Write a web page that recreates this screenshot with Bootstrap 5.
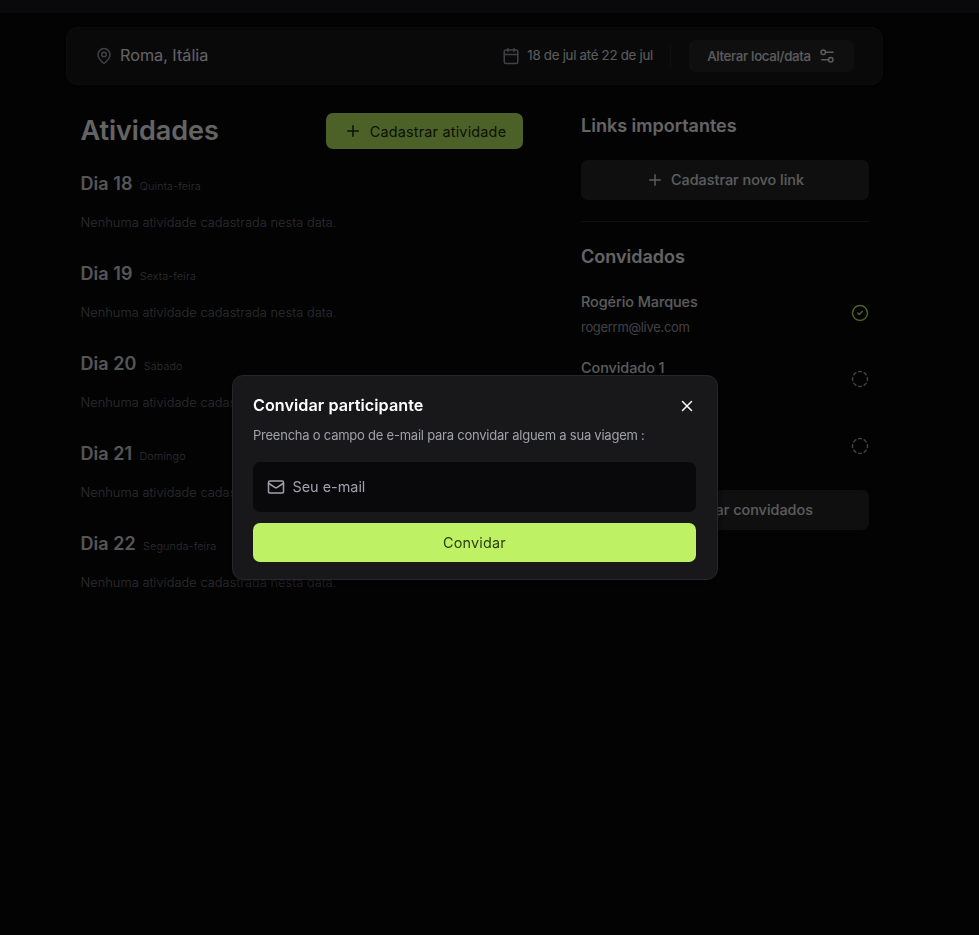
<!DOCTYPE html>
<html lang="pt-BR">
<head>
<meta charset="utf-8">
<meta name="viewport" content="width=device-width, initial-scale=1">
<title>Plann.er</title>
<link rel="stylesheet" href="https://cdn.jsdelivr.net/npm/bootstrap@5.3.0/dist/css/bootstrap.min.css">
<style>
html{font-size:14.4px}
body{font-family:Inter,sans-serif;font-size:14.4px;line-height:21.6px;background:#09090b;color:#fafafa;height:935px;overflow:hidden}
svg{display:block;flex:none;fill:none;stroke:currentColor;stroke-width:2;stroke-linecap:round;stroke-linejoin:round;width:18px;height:18px}
.trip{width:817px;margin-left:66px;padding-top:27px}
.trip-bar{height:58px;padding:0 28px;background:#18181b;border:1px solid #1f1f23;border-radius:11px;box-shadow:0 1px 4px #000}
.place{font-size:16.2px;gap:7px;color:#f4f4f5}
.when{font-size:13.3px;letter-spacing:-.28px;gap:7.5px;color:#e4e4e7}
.muted-ico{color:#a1a1aa}
.vline{width:1px;height:22px;background:#27272a;margin:0 18px 0 17px}
.btn-dark2,.btn-lime{--bs-btn-border-width:0;display:flex;align-items:center;justify-content:center;border-radius:7px;line-height:20px}
.btn-dark2,.btn-dark2:hover{background:#27272a;color:#e4e4e7;font-weight:500}
.btn-lime,.btn-lime:hover{background:#bef264;color:#1a2e05;letter-spacing:.2px}
.alter{height:32px;width:165px;font-size:13.3px;letter-spacing:-.32px;gap:7px;padding:0 0 1px}
.alter svg{margin-top:1px}
.full{height:40px;width:100%;font-size:14.4px;gap:7px;padding:0}
.trip-main{padding:28px 14px 0 14.4px}
.acts{width:442.6px}
.guests{width:288px}
.acts h1{font-size:27px;line-height:36px;font-weight:600;margin:0;color:#fafafa}
.add{width:197px;height:36px;font-size:14.4px;gap:8px;padding:2px 0 0 1px}
.add svg{margin-top:-2px}
.day{height:90px}
.day h2,.guests h2{font-size:18px;line-height:26px;font-weight:600;margin:0}
.day h2{color:#d4d4d8;letter-spacing:.08px}
.day small{font-size:10.8px;line-height:14px;color:#71717a;font-weight:300;margin-left:7.2px;letter-spacing:.12px}
.day p{font-size:12.8px;line-height:18px;color:#71717a;margin:17px 0 0;font-weight:300;letter-spacing:.06px}
.links-btn{margin-top:21px}
.rule{height:1px;background:#27272a;margin:21px 0 22px}
.guest-list{padding-top:21px}
.guest{height:66.3px}
.guest b{display:block;font-weight:500;color:#e4e4e7;line-height:22px;letter-spacing:-.05px}
.guest span{display:block;font-size:13px;line-height:18px;color:#a1a1aa;margin-top:5px;letter-spacing:-.3px}
.guest svg{margin-top:13px}
.ok{color:#bef264}
.shade{position:fixed;inset:13px 0 0;background:rgba(0,0,0,.6)}
.invite{position:fixed;left:232px;top:375px;width:486px;height:205px;padding:19px 21px 0 20px;background:#18181b;border:1px solid #26262a;border-radius:11px;box-shadow:0 3px 10px rgba(0,0,0,.6)}
.invite h3{font-size:16.2px;line-height:22px;font-weight:600;color:#fff;margin:-1px 0 1px;letter-spacing:.04px}
.invite p{font-size:13px;line-height:18px;color:#a1a1aa;margin:9px 0 18px;letter-spacing:-.23px}
.mailbox{height:50px;background:#09090b;border-radius:7px;padding-left:14px;gap:7.5px;color:#a1a1aa;margin-bottom:11px}
.mailbox input{background:none;border:0;outline:0;padding:0;font-size:14.4px;color:#fff}
.mailbox input::placeholder{color:#a1a1aa}
.btn-lime.send{height:39px;width:100%;font-size:14.4px;padding:0;color:#2b4010}
</style>
</head>
<body>
<div class="trip">
  <header class="trip-bar d-flex align-items-center justify-content-between">
    <div class="place d-flex align-items-center"><svg class="muted-ico" viewBox="0 0 24 24"><path d="M20 10c0 6-8 12-8 12s-8-6-8-12a8 8 0 0 1 16 0Z"/><circle cx="12" cy="10" r="3"/></svg>Roma, Itália</div>
    <div class="d-flex align-items-center">
      <div class="when d-flex align-items-center"><svg class="muted-ico" viewBox="0 0 24 24"><rect x="3" y="4" width="18" height="18" rx="2"/><path d="M8 2v4M16 2v4M3 10h18"/></svg><span>18 de jul até 22 de jul</span></div>
      <div class="vline"></div>
      <button class="btn btn-dark2 alter">Alterar local/data<svg viewBox="0 0 24 24"><path d="M20 7h-9M14 17H5"/><circle cx="17" cy="17" r="3"/><circle cx="7" cy="7" r="3"/></svg></button>
    </div>
  </header>
  <main class="trip-main d-flex justify-content-between">
    <section class="acts">
      <div class="d-flex justify-content-between align-items-center mb-4"><h1>Atividades</h1><button class="btn btn-lime add"><svg viewBox="0 0 24 24"><path d="M5 12h14M12 5v14"/></svg>Cadastrar atividade</button></div>
      <div class="day"><div class="d-flex align-items-baseline"><h2>Dia 18</h2><small>Quinta-feira</small></div><p>Nenhuma atividade cadastrada nesta data.</p></div>
      <div class="day"><div class="d-flex align-items-baseline"><h2>Dia 19</h2><small>Sexta-feira</small></div><p>Nenhuma atividade cadastrada nesta data.</p></div>
      <div class="day"><div class="d-flex align-items-baseline"><h2>Dia 20</h2><small>Sábado</small></div><p>Nenhuma atividade cadastrada nesta data.</p></div>
      <div class="day"><div class="d-flex align-items-baseline"><h2>Dia 21</h2><small>Domingo</small></div><p>Nenhuma atividade cadastrada nesta data.</p></div>
      <div class="day"><div class="d-flex align-items-baseline"><h2>Dia 22</h2><small>Segunda-feira</small></div><p>Nenhuma atividade cadastrada nesta data.</p></div>
    </section>
    <aside class="guests">
      <h2>Links importantes</h2>
      <button class="btn btn-dark2 full links-btn"><svg viewBox="0 0 24 24"><path d="M5 12h14M12 5v14"/></svg>Cadastrar novo link</button>
      <div class="rule"></div>
      <h2>Convidados</h2>
      <div class="guest-list">
        <div class="guest d-flex justify-content-between"><div><b>Rogério Marques</b><span>rogerrm@live.com</span></div><svg class="ok" viewBox="0 0 24 24"><circle cx="12" cy="12" r="10"/><path d="m9 12 2 2 4-4"/></svg></div>
        <div class="guest d-flex justify-content-between"><div><b>Convidado 1</b></div><svg class="muted-ico" viewBox="0 0 24 24"><path d="M10.1 2.18a9.93 9.93 0 0 1 3.8 0M17.6 3.71a9.95 9.95 0 0 1 2.69 2.7M21.82 10.1a9.93 9.93 0 0 1 0 3.8M20.29 17.6a9.95 9.95 0 0 1-2.7 2.69M13.9 21.82a9.94 9.94 0 0 1-3.8 0M6.4 20.29a9.95 9.95 0 0 1-2.69-2.7M2.18 13.9a9.93 9.93 0 0 1 0-3.8M3.71 6.4a9.95 9.95 0 0 1 2.7-2.69"/></svg></div>
        <div class="guest d-flex justify-content-between"><div></div><svg class="muted-ico" viewBox="0 0 24 24"><path d="M10.1 2.18a9.93 9.93 0 0 1 3.8 0M17.6 3.71a9.95 9.95 0 0 1 2.69 2.7M21.82 10.1a9.93 9.93 0 0 1 0 3.8M20.29 17.6a9.95 9.95 0 0 1-2.7 2.69M13.9 21.82a9.94 9.94 0 0 1-3.8 0M6.4 20.29a9.95 9.95 0 0 1-2.69-2.7M2.18 13.9a9.93 9.93 0 0 1 0-3.8M3.71 6.4a9.95 9.95 0 0 1 2.7-2.69"/></svg></div>
      </div>
      <button class="btn btn-dark2 full"><svg viewBox="0 0 24 24"><circle cx="18" cy="15" r="3"/><circle cx="9" cy="7" r="4"/><path d="M10 15H6a4 4 0 0 0-4 4v2"/></svg>Gerenciar convidados</button>
    </aside>
  </main>
</div>
<div class="shade"></div>
<div class="invite" role="dialog">
  <div class="d-flex justify-content-between align-items-center"><h3>Convidar participante</h3><svg viewBox="0 0 24 24"><path d="M18 6 6 18M6 6l12 12"/></svg></div>
  <p>Preencha o campo de e-mail para convidar alguem a sua viagem :</p>
  <div class="mailbox d-flex align-items-center"><svg viewBox="0 0 24 24"><rect x="2" y="4" width="20" height="16" rx="2"/><path d="m22 7-8.97 5.7a1.94 1.94 0 0 1-2.06 0L2 7"/></svg><input type="email" placeholder="Seu e-mail" aria-label="Seu e-mail"></div>
  <button class="btn btn-lime send">Convidar</button>
</div>
<script src="https://cdn.jsdelivr.net/npm/bootstrap@5.3.0/dist/js/bootstrap.bundle.min.js"></script>
</body>
</html>
